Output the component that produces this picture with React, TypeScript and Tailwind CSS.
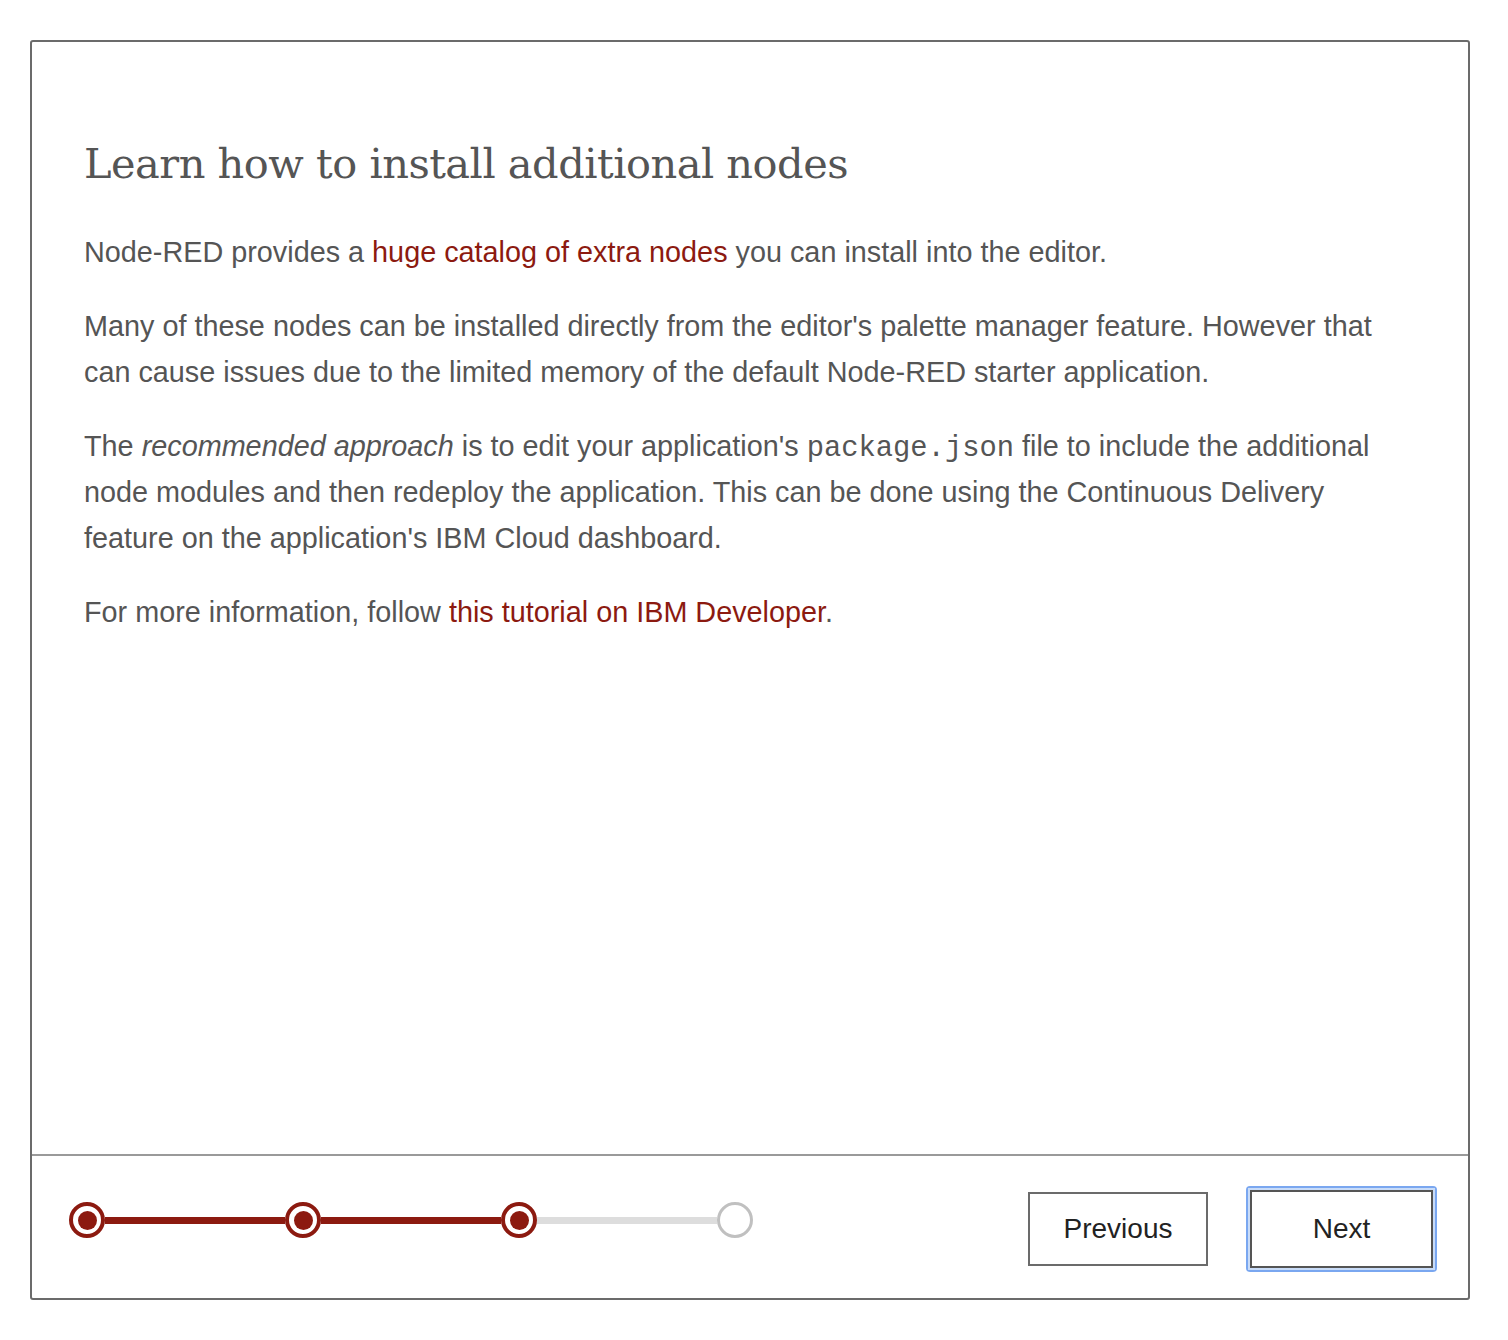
export default function App() {
  return (
    <div className="min-h-[1340px] w-[1508px] bg-white pt-[40px] pl-[30px]">
      <div className="flex h-[1260px] w-[1440px] flex-col rounded-[3px] border-2 border-[#6b6b6b]">
        {/* CONTENT */}
        <div className="flex-1 pl-[52px] pr-[60px] pt-[96px] text-[#555555] [font-family:'Liberation_Sans',Arial,sans-serif]">
          <h1 className="mb-[39px] text-[41.5px] leading-[52px] text-[#555555] [font-family:'DejaVu_Serif',serif] tracking-[-0.5px]">
            Learn how to install additional nodes
          </h1>
          <p className="mb-[28px] text-[28.8px] leading-[46px]">
            Node-RED provides a <a className="text-[#8c1a10]">huge catalog of extra nodes</a> you can install into the editor.
          </p>
          <p className="mb-[28px] text-[28.8px] leading-[46px]">
            Many of these nodes can be installed directly from the editor's palette manager feature. However that can cause issues due to the limited memory of the default Node-RED starter application.
          </p>
          <p className="mb-[28px] text-[28.8px] leading-[46px]">
            The <em>recommended approach</em> is to edit your application's{" "}
            <code className="[font-family:'Liberation_Mono',monospace] text-[28.8px] leading-[0]">package.json</code> file to include the additional node modules and then redeploy the application. This can be done using the Continuous Delivery feature on the application's IBM Cloud dashboard.
          </p>
          <p className="text-[28.8px] leading-[46px]">
            For more information, follow <a className="text-[#8c1a10]">this tutorial on IBM Developer</a>.
          </p>
        </div>
        {/* FOOTER */}
        <div className="flex h-[144px] items-center justify-between border-t-2 border-[#9a9a9a] pl-[37px] pr-[31px]">
          <div className="-mt-[14px] flex items-center">
            <Dot active />
            <Bar active />
            <Dot active />
            <Bar active />
            <Dot active />
            <Bar />
            <Dot />
          </div>
          <div className="mt-[4px] flex items-center gap-[38px] [font-family:'Liberation_Sans',Arial,sans-serif]">
            <button className="h-[74px] w-[180px] border-2 border-[#6b6b6b] bg-white text-[28px] text-[#222]">
              Previous
            </button>
            <div className="rounded-[4px] bg-[#7aa7f0] p-[4px]">
              <button className="h-[78px] w-[183px] border-2 border-[#555] bg-white text-[28px] text-[#222] outline outline-2 outline-[#c9dcf8]">
                Next
              </button>
            </div>
          </div>
        </div>
      </div>
    </div>
  )
}

function Dot({ active }: { active?: boolean }) {
  if (active) {
    return (
      <div className="flex h-[36px] w-[36px] items-center justify-center rounded-full border-[4px] border-[#8c1a10] bg-white">
        <div className="h-[19px] w-[19px] rounded-full bg-[#8c1a10]" />
      </div>
    )
  }
  return <div className="h-[36px] w-[36px] rounded-full border-[3px] border-[#c0c0c0] bg-white" />
}

function Bar({ active }: { active?: boolean }) {
  return <div className={active ? "h-[7px] w-[180px] bg-[#8c1a10]" : "h-[7px] w-[180px] bg-[#dddddd]"} />
}
